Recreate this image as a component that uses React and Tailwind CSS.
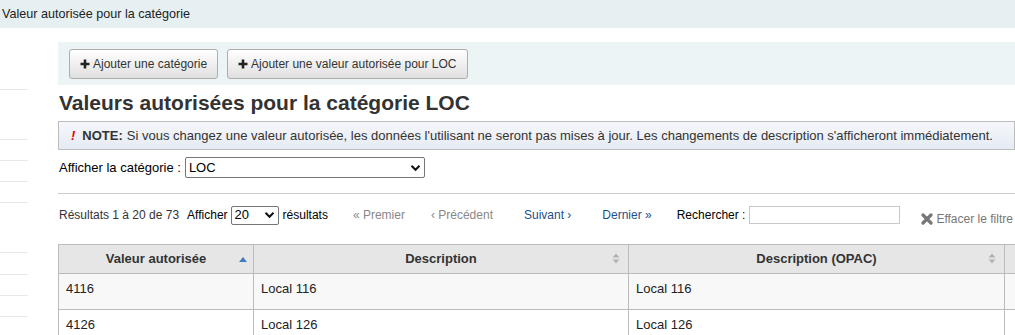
import React from "react";

const font = { fontFamily: '"Liberation Sans", Arial, sans-serif' };

const Plus = () => (
  <svg width="10" height="10" viewBox="0 0 10 10" className="shrink-0">
    <path d="M5 0.5v9M0.5 5h9" stroke="#222" strokeWidth="2.6" />
  </svg>
);

const Chevron = ({ className = "" }) => (
  <svg width="11" height="8" viewBox="0 0 11 8" className={className}>
    <path d="M1.5 1.8l4 4 4-4" fill="none" stroke="#111" strokeWidth="2" />
  </svg>
);

const SortBoth = () => (
  <svg width="8" height="11" viewBox="0 0 8 11">
    <path d="M4 0.5l3.5 4h-7z" fill="#b3b3b3" />
    <path d="M4 10.5l3.5-4h-7z" fill="#b3b3b3" />
  </svg>
);

const SortUp = () => (
  <svg width="8" height="5" viewBox="0 0 8 5">
    <path d="M4 0l4 5h-8z" fill="#3d7ebf" />
  </svg>
);

const FakeSelect = ({ value, className }) => (
  <div
    className={
      "flex items-center justify-between border border-[#767676] rounded-[2px] bg-white px-[3px] text-[13px] text-black " +
      className
    }
  >
    <span>{value}</span>
    <Chevron />
  </div>
);

const sideRows = [62, 50, 21, 21, 21, 50, 22, 21, 21];

const rows = [
  ["4116", "Local 116", "Local 116"],
  ["4126", "Local 126", "Local 126"],
];

export default function App() {
  return (
    <div className="w-[1015px] h-[335px] overflow-hidden bg-white text-[#333]" style={font}>
      <div className="h-[28px] bg-[#e6f0f2] flex items-center px-[2px] text-[12.6px] text-[#222]">
        Valeur autorisée pour la catégorie
      </div>

      <div className="flex">
        <div className="w-[28px] shrink-0 flex flex-col">
          {sideRows.map((h, i) => (
            <div key={i} className="border-b border-[#e8e8e8]" style={{ height: h }} />
          ))}
        </div>

        <div className="ml-[30px] w-[1100px] shrink-0">
          <div className="mt-[14px] h-[43px] bg-[#edf4f6] flex items-center gap-[9px] pl-[11px]">
            <button className="h-[30px] px-[10px] flex items-center gap-[3px] border border-[#adadad] rounded-[3px] bg-gradient-to-b from-white to-[#e0e0e0] text-[12px] text-[#333]">
              <Plus />
              Ajouter une catégorie
            </button>
            <button className="h-[30px] px-[10px] flex items-center gap-[3px] border border-[#adadad] rounded-[3px] bg-gradient-to-b from-white to-[#e0e0e0] text-[12px] text-[#333]">
              <Plus />
              Ajouter une valeur autorisée pour LOC
            </button>
          </div>

          <h1 className="mt-[5px] text-[21px] leading-[26px] font-bold text-[#333] pl-[1px]">
            Valeurs autorisées pour la catégorie LOC
          </h1>

          <div className="mt-[5px] h-[29px] w-[957px] border border-[#bcbcbc] bg-gradient-to-b from-[#f5f7fb] to-[#e6eaf3] flex items-center pl-[12px] text-[13px] text-[#333]">
            <span className="text-[#d00] font-bold italic mr-[7px]">!</span>
            <span className="font-bold mr-[4px]">NOTE:</span>
            Si vous changez une valeur autorisée, les données l'utilisant ne seront pas mises à jour. Les changements de description s'afficheront immédiatement.
          </div>

          <div className="mt-[7px] flex items-center gap-[4px] pl-[1px] text-[13px] text-black">
            <span>Afficher la catégorie :</span>
            <FakeSelect value="LOC" className="w-[240px] h-[21px]" />
          </div>

          <div className="mt-[15px] w-[957px] border-t border-[#cccccc]" />

          <div className="mt-[11px] flex items-center text-[12px] pl-[1px] h-[20px]">
            <span className="text-[#333]">Résultats 1 à 20 de 73</span>
            <span className="ml-[8px] text-black">Afficher</span>
            <FakeSelect value="20" className="ml-[3px] w-[48px] h-[19px]" />
            <span className="ml-[4px] text-black">résultats</span>
            <span className="ml-[25px] text-[#888]">« Premier</span>
            <span className="ml-[26px] text-[#888]">‹ Précédent</span>
            <span className="ml-[31px] text-[#1d4f8c]">Suivant ›</span>
            <span className="ml-[31px] text-[#1d4f8c]">Dernier »</span>
            <span className="ml-[25px] text-black">Rechercher :</span>
            <div className="ml-[4px] w-[151px] h-[18px] border border-[#c8c8c8] bg-white" />
            <span className="ml-[21px] mt-[7px] flex items-center gap-[3px] text-[#777]">
              <svg width="12" height="12" viewBox="0 0 12 12">
                <path d="M2 2l8 8M10 2l-8 8" stroke="#777" strokeWidth="3.2" strokeLinecap="round" />
              </svg>
              Effacer le filtre
            </span>
          </div>

          <table className="mt-[19px] border-collapse text-[13px] text-[#222]">
            <thead>
              <tr className="bg-[#e6e6e6] h-[29px]">
                <th className="w-[195px] border border-[#bcbcbc] font-bold text-[#333] relative">
                  Valeur autorisée
                  <span className="absolute right-[6px] top-[12px] flex"><SortUp /></span>
                </th>
                <th className="w-[375px] border border-[#bcbcbc] font-bold text-[#333] relative">
                  Description
                  <span className="absolute right-[8px] top-[8px] flex"><SortBoth /></span>
                </th>
                <th className="w-[376px] border border-[#bcbcbc] font-bold text-[#333] relative">
                  Description (OPAC)
                  <span className="absolute right-[8px] top-[8px] flex"><SortBoth /></span>
                </th>
                <th className="w-[100px] border border-[#bcbcbc]"></th>
              </tr>
            </thead>
            <tbody>
              {rows.map((r, i) => (
                <tr key={r[0]} className={i % 2 === 0 ? "bg-[#f8f8f8] h-[36px]" : "bg-white h-[36px]"}>
                  {r.map((c, j) => (
                    <td key={j} className="border border-[#bcbcbc] align-top px-[7px] pt-[5px]">
                      {c}
                    </td>
                  ))}
                  <td className="border border-[#bcbcbc]"></td>
                </tr>
              ))}
            </tbody>
          </table>
        </div>
      </div>
    </div>
  );
}
